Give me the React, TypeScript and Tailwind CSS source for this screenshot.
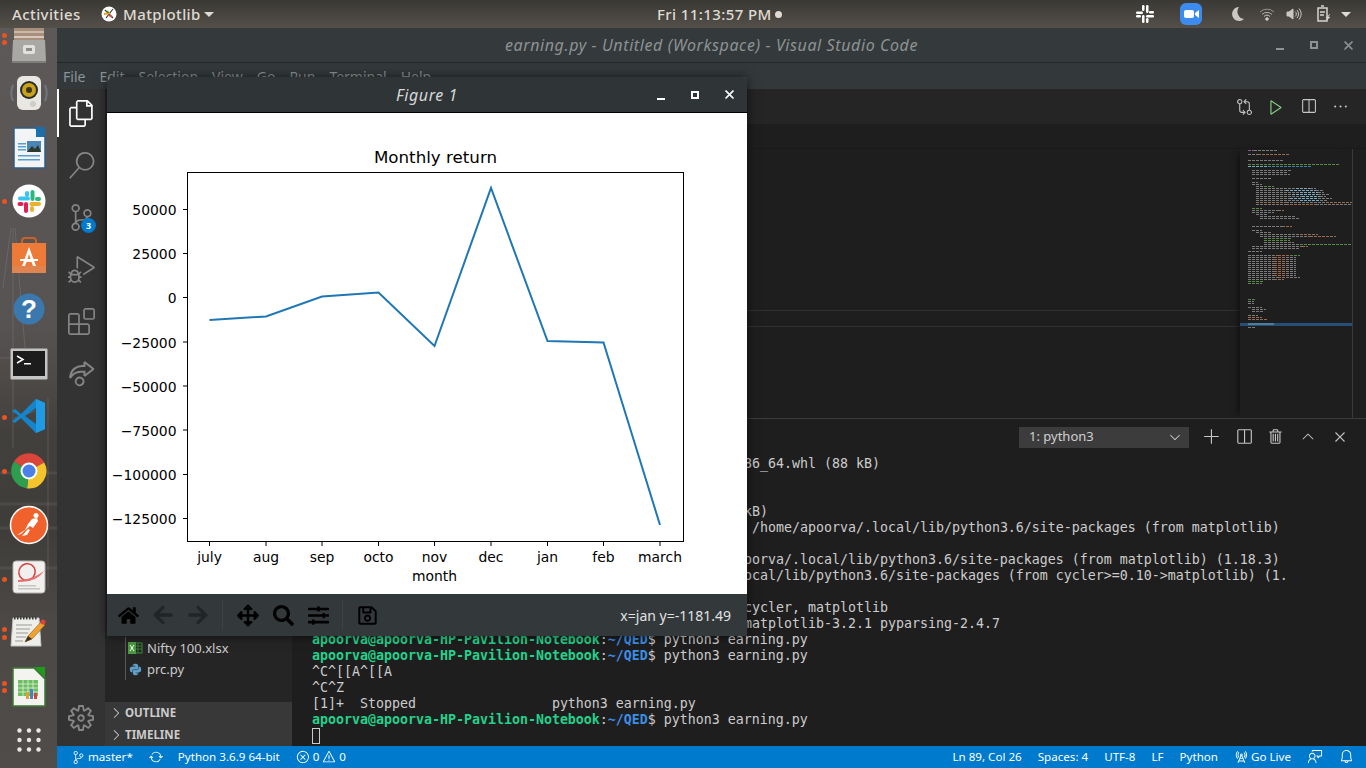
import { FaArrowLeft, FaArrowRight, FaArrowsAlt, FaHome, FaPython, FaRegSave, FaSearch, FaSlidersH } from 'react-icons/fa'
import {
  VscAdd, VscBell, VscChevronDown, VscChevronRight, VscChevronUp, VscClose, VscDebugAlt, VscEllipsis, VscError,
  VscExtensions, VscFeedback, VscFiles, VscGitCompare, VscLiveShare, VscPlay, VscRadioTower, VscSearch,
  VscSettingsGear, VscSourceControl, VscSplitHorizontal, VscSync, VscTrash, VscWarning,
} from 'react-icons/vsc'

function WindowButtons({ className }: { className: string }) {
  return (
    <div className={`flex items-center ${className}`}>
      <div className="w-[34px] flex justify-center"><div className="w-2 h-[2px] bg-current mt-2" /></div>
      <div className="w-[34px] flex justify-center"><div className="w-2 h-2 border-2 border-current" /></div>
      <div className="w-[34px] flex justify-center"><VscClose size={15} strokeWidth={1} /></div>
    </div>
  )
}

function Files() {
  return (
    <svg width="40" height="44" viewBox="0 0 40 44">
      <rect x="5" y="0" width="30" height="16" fill="#a88f7c" />
      <rect x="5" y="6" width="30" height="2" fill="#c9b8a8" />
      <rect x="5" y="11" width="30" height="2" fill="#d6c8bc" />
      <path d="M4 15h32l1 21a2 2 0 0 1-2 2H5a2 2 0 0 1-2-2z" fill="#aaa8a4" />
      <rect x="3" y="36" width="34" height="2" fill="#807e7b" />
      <rect x="14" y="20" width="12" height="9" rx="2" fill="#e2e0dd" />
      <rect x="17" y="23" width="6" height="3" fill="#8f8d8a" />
    </svg>
  )
}

function Speaker() {
  return (
    <svg width="44" height="44" viewBox="0 0 44 44">
      <path d="M6 14a20 20 0 0 0 0 16M38 14a20 20 0 0 1 0 16" fill="none" stroke="#7f8a99" strokeWidth="2" opacity=".6" />
      <rect x="10" y="5" width="24" height="34" rx="6" fill="#e9e7e2" />
      <circle cx="22" cy="19" r="9" fill="#2d2b26" />
      <circle cx="22" cy="19" r="7" fill="#c8a21c" />
      <circle cx="22" cy="19" r="3" fill="#3a3420" />
      <circle cx="26" cy="33" r="3" fill="#cfcdc8" />
    </svg>
  )
}

function Writer() {
  return (
    <svg width="40" height="44" viewBox="0 0 40 44">
      <path d="M5 2h22l9 9v31H5z" fill="#f2f4f5" stroke="#2f5e85" strokeWidth="1.5" />
      <path d="M27 2l9 9h-9z" fill="#1b72b0" />
      <path d="M24 1h12v10z" fill="#1b6ea8" />
      <rect x="9" y="17" width="8" height="1.5" fill="#5a9fd0" />
      <rect x="9" y="20" width="8" height="1.5" fill="#5a9fd0" />
      <rect x="9" y="23" width="8" height="1.5" fill="#5a9fd0" />
      <rect x="9" y="29" width="22" height="1.5" fill="#5a9fd0" />
      <rect x="9" y="33" width="22" height="1.5" fill="#5a9fd0" />
      <rect x="18" y="15" width="14" height="11" fill="#4c86b4" />
      <path d="M18 26l5-6 3 3 3-4 3 7z" fill="#2b3a2c" />
    </svg>
  )
}

function Slack() {
  return (
    <svg width="34" height="34" viewBox="0 0 34 34">
      <circle cx="17" cy="17" r="16.5" fill="#fff" />
      <rect x="6" y="12.5" width="12" height="4" rx="2" fill="#36c5f0" />
      <rect x="13" y="7" width="4" height="6" rx="2" fill="#36c5f0" />
      <rect x="18.5" y="6" width="4" height="11" rx="2" fill="#2eb67d" />
      <rect x="23" y="13" width="6" height="4" rx="2" fill="#2eb67d" />
      <rect x="17.5" y="18" width="11.5" height="4" rx="2" fill="#ecb22e" />
      <rect x="18" y="22" width="4" height="6" rx="2" fill="#ecb22e" />
      <rect x="12" y="18" width="4" height="11" rx="2" fill="#e01e5a" />
      <rect x="5.5" y="18" width="6" height="4" rx="2" fill="#e01e5a" />
    </svg>
  )
}

function AppStore() {
  return (
    <svg width="36" height="38" viewBox="0 0 36 38">
      <path d="M11 8V5a3 3 0 0 1 3-3h8a3 3 0 0 1 3 3v3" fill="none" stroke="#c9622a" strokeWidth="2" />
      <path d="M1 7h34v30H1z" fill="#ee7a38" />
      <rect x="1" y="30" width="34" height="7" fill="#e0854f" />
      <path d="M18 11l-7 19h3l1.5-4h5l1.5 4h3zM16.500 23l1.500-5 1.500 5z" fill="#fff" fillRule="evenodd" />
      <rect x="9" y="23" width="18" height="2" fill="#fff" />
    </svg>
  )
}

function Help() {
  return (
    <svg width="32" height="32" viewBox="0 0 32 32">
      <circle cx="16" cy="16" r="15.500" fill="#3b78ad" />
      <text x="16" y="25" textAnchor="middle" fill="#fff" className="font-['Liberation_Sans',sans-serif] text-[26px] font-bold">?</text>
    </svg>
  )
}

function Terminal() {
  return (
    <svg width="38" height="32" viewBox="0 0 38 32">
      <rect x=".5" y=".5" width="37" height="31" rx="1" fill="#c4c4c2" />
      <rect x="3" y="3" width="32" height="25" fill="#1c1c1c" />
      <path d="M7 8l6 3.500-6 3.500" fill="none" stroke="#fff" strokeWidth="1.500" />
      <rect x="14" y="15" width="7" height="1.500" fill="#fff" />
    </svg>
  )
}

function VsCode() {
  return (
    <svg width="36" height="36" viewBox="0 0 36 36">
      <path d="M25 1L10 16 4 11l-3 2 7 5-7 5 3 2 6-5 15 15 9-4V5zM25 10v16L14 18z" fill="#1484cd" fillRule="evenodd" />
      <path d="M25 1l9 4v26l-9 4v-9-16z" fill="#1e9be4" />
    </svg>
  )
}

function Chrome() {
  return (
    <svg width="36" height="36" viewBox="0 0 36 36">
      <path d="M18 18L3 8.500A17.500 17.500 0 0 1 33.200 9.500z" fill="#d9453a" />
      <path d="M18 18L33.200 9.500A17.500 17.500 0 0 1 16 35.400z" fill="#f5c32c" />
      <path d="M18 18L16 35.400A17.500 17.500 0 0 1 3 8.500z" fill="#2f9d4e" />
      <circle cx="18" cy="18" r="8.500" fill="#fff" />
      <circle cx="18" cy="18" r="6.500" fill="#4a80e8" />
    </svg>
  )
}

function Postman() {
  return (
    <svg width="40" height="40" viewBox="0 0 40 40">
      <circle cx="20" cy="20" r="18.500" fill="#f0612c" stroke="#fff" strokeWidth="1.500" />
      <circle cx="27" cy="10.500" r="2.500" fill="#fff" />
      <path d="M8 30l4-1 9-8 3 2 5-7-1-3-5 1-4 5-3 6zM13 31l5-1 3-5-2-1z" fill="#fff" />
    </svg>
  )
}

function Evince() {
  return (
    <svg width="34" height="36" viewBox="0 0 34 36">
      <rect x="1" y="2" width="32" height="32" rx="3" fill="#f1f0ee" stroke="#b5b3af" />
      <ellipse cx="15" cy="13" rx="8" ry="8.500" transform="rotate(35 15 13)" fill="none" stroke="#d4403c" strokeWidth="1.500" />
      <path d="M6 21c9 0 18-3 26-9-5 7-12 11-26 11z" fill="#e3716d" />
      <rect x="6" y="26" width="18" height="1.500" fill="#c5c4c1" />
      <rect x="6" y="29" width="22" height="1.500" fill="#c5c4c1" />
    </svg>
  )
}

function Notepad() {
  return (
    <svg width="38" height="36" viewBox="0 0 38 36">
      <path d="M3 4h26l2 28H1z" fill="#eeeeea" stroke="#c5c4bf" />
      <path d="M4 4h24" stroke="#3a3a38" strokeWidth="3" strokeDasharray="1.500 1.500" />
      <path d="M6 11h16M6 15h14M6 19h12M6 23h10M5 27h8" stroke="#9a9a96" strokeWidth="1" />
      <path d="M15 28l3-6 13-14 4 3-13 14z" fill="#f0a12e" stroke="#8a5a1a" strokeWidth=".6" />
      <path d="M15 28l3-6 4 3z" fill="#3a3020" />
      <circle cx="33" cy="8" r="2.500" fill="#d9453a" />
    </svg>
  )
}

function Calc() {
  return (
    <svg width="36" height="42" viewBox="0 0 36 42">
      <path d="M2 2h21l11 11v27H2z" fill="#f3f3f0" stroke="#3c7a32" strokeWidth="1.500" />
      <path d="M23 1h11v11z" fill="#1f9a1f" />
      <rect x="7" y="14" width="20" height="16" fill="#6cbf5e" />
      <path d="M7 18h20M7 22h20M7 26h20M12 14v16M17 14v16M22 14v16" stroke="#f3f3f0" strokeWidth=".7" />
      <rect x="15" y="26" width="3" height="7" fill="#e0a030" />
      <rect x="19" y="23" width="3" height="10" fill="#4a80c8" />
      <rect x="23" y="27" width="3" height="6" fill="#d9453a" />
    </svg>
  )
}

function Dots() {
  return (
    <svg width="24" height="24" viewBox="0 0 24 24" fill="#e8e8e6">
      <circle cx="2.500" cy="2.500" r="2.200" /><circle cx="12" cy="2.500" r="2.200" /><circle cx="21.500" cy="2.500" r="2.200" />
      <circle cx="2.500" cy="12" r="2.200" /><circle cx="12" cy="12" r="2.200" /><circle cx="21.500" cy="12" r="2.200" />
      <circle cx="2.500" cy="21.500" r="2.200" /><circle cx="12" cy="21.500" r="2.200" /><circle cx="21.500" cy="21.500" r="2.200" />
    </svg>
  )
}

const dockItems = [
  { h: 'h-[38px]', icon: <Files /> },
  { h: 'h-[54px]', icon: <Speaker /> },
  { h: 'h-[56px]', icon: <Writer /> },
  { h: 'h-[50px]', icon: <Slack /> },
  { h: 'h-[58px]', icon: <AppStore /> },
  { h: 'h-[50px]', icon: <Help /> },
  { h: 'h-[60px]', icon: <Terminal /> },
  { h: 'h-[44px]', icon: <VsCode /> },
  { h: 'h-[66px]', icon: <Chrome /> },
  { h: 'h-[42px]', icon: <Postman /> },
  { h: 'h-[62px]', icon: <Evince /> },
  { h: 'h-[48px]', icon: <Notepad /> },
  { h: 'h-[62px]', icon: <Calc /> },
  { h: 'h-[44px]', icon: <Dots /> },
]

const dockDots = [
  'top-[5px]', 'top-[12px]', 'top-[171px]', 'top-[387px]', 'top-[441px]', 'top-[549px]', 'top-[599px]', 'top-[607px]', 'top-[653px]', 'top-[660px]',
]

function Dock() {
  return (
    <div className="w-[57px] shrink-0 relative overflow-hidden flex flex-col bg-[linear-gradient(180deg,#5c5958_0%,#575352_40%,#42403d_55%,#3f3d3a_68%,#4b4846_80%,#4f4c4a_100%)]">
      {/* the wallpaper's mast, seen through the dock */}
      <svg className="absolute left-0 top-0" width="57" height="740" viewBox="0 0 57 740" fill="none" stroke="#8a8783" strokeOpacity=".35">
        <path d="M13 200V420M11 200l-8 60M15 200l10 120M0 330h18M48 370V560M44 380l-30 10" />
        <path d="M0 445h57M0 476h57M0 500h57M0 540h57" strokeOpacity=".18" strokeWidth="3" />
      </svg>
      {dockItems.map((item, i) => (
        <div key={i} className={`${item.h} shrink-0 flex items-center justify-center relative`}>{item.icon}</div>
      ))}
      {dockDots.map((d) => (
        <div key={d} className={`absolute left-[2px] w-[5px] h-[5px] rounded-full bg-[#e95420] ${d}`} />
      ))}
    </div>
  )
}

function TopBar() {
  return (
    <div className="h-[28px] shrink-0 flex items-center bg-gradient-to-b from-[#3a3935] to-[#544f49] text-[#dfdbd2] text-[15px] tracking-[0.4px] font-medium">
      <span className="ml-3 w-[89px]">Activities</span>
      <svg width="16" height="16" viewBox="0 0 16 16">
        <circle cx="8" cy="8" r="7.500" fill="#fff" />
        <path d="M4 4l8 8M12 3l-7 9" stroke="#3a3a3a" strokeWidth="1.200" />
        <path d="M3 8l6-1" stroke="#e8a020" strokeWidth="2" />
        <path d="M8 9l3 2" stroke="#d9453a" strokeWidth="2" />
        <path d="M6 5l2 2" stroke="#3a9a3a" strokeWidth="1.500" />
      </svg>
      <span className="ml-[6px] w-[81px]">Matplotlib</span>
      <div className="w-0 h-0 border-x-[5px] border-x-transparent border-t-[5px] border-t-[#dfdbd2]" />
      <span className="ml-[443px]">Fri 11:13:57 PM</span>
      <div className="ml-[3px] w-[7px] h-[7px] rounded-full bg-[#dfdbd2]" />
      <div className="ml-auto flex items-center pr-[15px]">
        <svg width="20" height="20" viewBox="0 0 20 20" fill="#fff">
          <rect x="1" y="7.500" width="7" height="2.500" rx="1.200" /><rect x="7" y="1" width="2.500" height="6" rx="1.200" />
          <rect x="11" y="1" width="2.500" height="8" rx="1.200" /><rect x="14" y="7" width="5" height="2.500" rx="1.200" />
          <rect x="11" y="11" width="8" height="2.500" rx="1.200" /><rect x="11" y="14" width="2.500" height="5" rx="1.200" />
          <rect x="7" y="11" width="2.500" height="8" rx="1.200" /><rect x="1" y="11" width="5" height="2.500" rx="1.200" />
        </svg>
        <div className="ml-[25px] w-[22px] h-[22px] rounded-[6px] bg-[#3c8cf0] flex items-center justify-center">
          <svg width="15" height="10" viewBox="0 0 15 10" fill="#fff">
            <rect x="0" y="1" width="10" height="8" rx="2" /><path d="M11 4l4-3v8l-4-3z" />
          </svg>
        </div>
        <svg className="ml-[29px]" width="14" height="16" viewBox="0 0 14 16" fill="#c9c7c2">
          <path d="M8 1a7 7 0 1 0 5 12A7.500 7.500 0 0 1 8 1z" />
        </svg>
        <svg className="ml-[14px]" width="16" height="14" viewBox="0 0 16 14" fill="none" stroke="#c9c7c2">
          <path d="M1 5a10 10 0 0 1 14 0" strokeOpacity=".6" /><path d="M3 7.500a7 7 0 0 1 10 0" strokeOpacity=".8" /><path d="M5 9.500a4 4 0 0 1 6 0" />
          <circle cx="8" cy="12" r="1.300" fill="#c9c7c2" />
        </svg>
        <svg className="ml-[11px]" width="16" height="14" viewBox="0 0 16 14" fill="#c9c7c2" stroke="#c9c7c2">
          <path d="M1 5h2l4-3v10l-4-3H1z" /><path d="M9 4.500a3 3 0 0 1 0 5M11 3a6 6 0 0 1 0 8M13 1.500a8 8 0 0 1 0 11" fill="none" />
        </svg>
        <svg className="ml-[15px]" width="14" height="18" viewBox="0 0 14 18" fill="none" stroke="#d5d3ce" strokeWidth="1.500">
          <path d="M1 3h9v13H1zM4 1h3" /><path d="M3 7h5M3 10h4" />
          <path d="M13 9l-4 4h2l-2 3 4-4h-2z" fill="#d5d3ce" strokeWidth=".4" />
        </svg>
        <div className="ml-[10px] w-0 h-0 border-x-[5px] border-x-transparent border-t-[5px] border-t-[#dfdbd2]" />
      </div>
    </div>
  )
}

function ActivityBar() {
  const cls = 'h-12 flex items-center justify-center text-[#858585]'
  return (
    <div className="w-[48px] shrink-0 bg-[#333333] flex flex-col gap-1">
      <div className="h-12 flex items-center justify-center text-white border-l-2 border-white pr-[2px]"><VscFiles size={27} /></div>
      <div className={cls}><VscSearch size={27} /></div>
      <div className={`${cls} relative`}>
        <VscSourceControl size={27} />
        <span className="absolute left-[24px] top-[25px] w-[15px] h-[15px] rounded-full bg-[#007acc] text-white text-[9px] font-bold flex items-center justify-center">3</span>
      </div>
      <div className={cls}><VscDebugAlt size={27} /></div>
      <div className={cls}><VscExtensions size={27} /></div>
      <div className={cls}><VscLiveShare size={27} /></div>
      <div className={`${cls} mt-auto mb-[4px]`}><VscSettingsGear size={26} /></div>
    </div>
  )
}

function SideBar() {
  return (
    <div className="w-[187px] shrink-0 bg-[#252526] flex flex-col justify-end text-[#cccccc]">
      <div className="ml-[20px] mb-[22px] border-l border-[#585858] text-[13px] leading-[21px]">
        <div className="h-[22px] flex items-center pl-[2px] gap-[4px]">
          <svg width="15" height="14" viewBox="0 0 15 14">
            <rect x="6" y="2" width="8" height="10" fill="none" stroke="#3f8a3f" />
            <path d="M6 5h8M6 8h8M10 2v10" stroke="#3f8a3f" strokeWidth=".8" />
            <rect x="0" y="1" width="8" height="12" fill="#4c9a3f" />
            <path d="M2 4l4 6M6 4l-4 6" stroke="#fff" strokeWidth="1" />
          </svg>
          <span>Nifty 100.xlsx</span>
        </div>
        <div className="h-[21px] flex items-center pl-[3px] gap-[5px]">
          <FaPython size={13} className="text-[#5f9fc9]" />
          <span>prc.py</span>
        </div>
      </div>
      <div className="h-[22px] bg-[#383838] flex items-center pl-[3px] gap-[1px] text-[11.5px] font-bold">
        <VscChevronRight size={16} /><span>OUTLINE</span>
      </div>
      <div className="h-[22px] bg-[#383838] flex items-center pl-[3px] gap-[1px] text-[11.5px] font-bold">
        <VscChevronRight size={16} /><span>TIMELINE</span>
      </div>
    </div>
  )
}

const mg = '#7a7a7a'
const mp = '#8a5a96'
const mo = '#9a6a50'
const mn = '#568a44'
const mb = '#4480ae'
const ml = '#7aaac0'

const minimap: [number, number, [number, string][]][] = [
  [147, 1248, [[6, mp], [8, mg]]],
  [149, 1248, [[6, mp], [24, mg]]],
  [153, 1248, [[10, mg], [32, mo]]],
  [159, 1248, [[36, mg]]],
  [163, 1248, [[92, mn]]],
  [165, 1248, [[20, ml], [44, mb]]],
  [169, 1252, [[40, mg]]],
  [171, 1252, [[36, mg]]],
  [173, 1252, [[38, mg]]],
  [177, 1252, [[20, mg]]],
  [181, 1252, [[6, mg]]],
  [183, 1252, [[10, mg]]],
  [185, 1256, [[8, mg], [10, mn]]],
  [187, 1256, [[40, mg], [14, ml], [6, mg]]],
  [189, 1256, [[30, mg], [30, ml], [8, mg]]],
  [191, 1256, [[44, mg], [18, ml], [6, mg]]],
  [193, 1256, [[36, mg], [26, ml], [12, mg]]],
  [195, 1256, [[46, mg], [18, ml], [6, mg]]],
  [197, 1256, [[34, mg], [28, ml], [14, mg]]],
  [199, 1256, [[44, mg], [20, ml], [8, mg]]],
  [201, 1256, [[30, mo], [40, mg], [26, mo]]],
  [203, 1256, [[30, mg], [30, mo], [36, mg]]],
  [207, 1252, [[10, mn]]],
  [209, 1252, [[26, mg], [6, mo]]],
  [211, 1252, [[22, mg]]],
  [213, 1256, [[12, mg]]],
  [215, 1260, [[36, mg]]],
  [217, 1260, [[40, mg]]],
  [225, 1252, [[30, mg], [10, mo]]],
  [229, 1252, [[10, mg]]],
  [231, 1256, [[16, mg]]],
  [233, 1260, [[40, mg], [18, mo]]],
  [235, 1260, [[50, mg], [26, mo]]],
  [237, 1264, [[28, mn]]],
  [239, 1264, [[26, mn]]],
  [241, 1264, [[30, mg]]],
  [243, 1264, [[36, mg], [52, mn]]],
  [245, 1252, [[50, mg], [6, mo]]],
  [247, 1252, [[48, mg]]],
  [250, 1248, [[14, mg]]],
  [254, 1248, [[30, mg], [12, mo], [10, mn]]],
  [256, 1248, [[26, mg], [12, mo], [10, mg]]],
  [258, 1248, [[26, mg], [12, mo], [10, mg]]],
  [260, 1248, [[26, mg], [12, mo], [10, mg]]],
  [262, 1248, [[26, mg], [12, mo], [10, mg]]],
  [264, 1248, [[26, mg], [12, mo], [10, mg]]],
  [266, 1248, [[26, mg], [12, mo], [10, mg]]],
  [268, 1248, [[26, mg], [12, mo], [10, mg]]],
  [270, 1248, [[26, mg], [12, mo], [10, mg]]],
  [272, 1248, [[26, mg], [12, mo], [10, mg]]],
  [274, 1248, [[26, mg], [12, mo], [10, mg]]],
  [276, 1248, [[30, mg], [12, mo], [10, mg]]],
  [278, 1248, [[26, mg], [10, mo]]],
  [280, 1248, [[16, mn]]],
  [282, 1248, [[14, mn]]],
  [298, 1248, [[8, mn]]],
  [300, 1248, [[6, mg]]],
  [302, 1248, [[6, mg]]],
  [306, 1248, [[14, mg]]],
  [308, 1252, [[14, mg]]],
  [310, 1252, [[12, mg]]],
  [314, 1248, [[10, mg]]],
  [316, 1248, [[14, mo]]],
  [318, 1248, [[20, mo]]],
  [326, 1248, [[8, mg]]],
]

function Minimap() {
  return (
    <svg width="112" height="270" viewBox="1240 148 112 270">
      <rect x="1240" y="322" width="112" height="3" fill="#264f78" />
      <rect x="1248" y="322" width="26" height="2" fill={ml} opacity=".5" />
      {minimap.map(([y, x, segs]) => {
        let cur = x
        return segs.map(([w, c], i) => {
          const l = <path key={`${y}-${i}`} d={`M${cur} ${y + 0.5}h${w}`} stroke={c} strokeDasharray="3 1" />
          cur += w
          return l
        })
      })}
    </svg>
  )
}

function Prompt({ children }: { children?: string }) {
  return (
    <div className="h-4 whitespace-pre">
      <span className="text-[#23d18b] font-bold">apoorva@apoorva-HP-Pavilion-Notebook</span>
      <span>:</span>
      <span className="text-[#3b8eea] font-bold">~/QED</span>
      <span>$ {children}</span>
    </div>
  )
}

function Panel() {
  return (
    <div className="h-[328px] shrink-0 border-t border-[#3c3c3c] bg-[#1e1e1e] flex flex-col">
      <div className="h-[36px] shrink-0 flex items-center justify-end pr-[10px] text-[#c5c5c5]">
        <div className="w-[170px] h-[21px] bg-[#3c3c3c] flex items-center justify-between pl-[10px] pr-[6px] text-[13px] text-[#d0d0d0]">
          <span>1: python3</span>
          <VscChevronDown size={16} />
        </div>
        <div className="ml-[7px] w-8 flex justify-center"><VscAdd size={18} /></div>
        <div className="w-8 flex justify-center"><VscSplitHorizontal size={18} /></div>
        <div className="w-8 flex justify-center"><VscTrash size={18} /></div>
        <div className="w-8 flex justify-center"><VscChevronUp size={18} /></div>
        <div className="w-8 flex justify-center"><VscClose size={18} /></div>
      </div>
      <div className="pl-[20px] pt-[1px] font-['DejaVu_Sans_Mono',monospace] text-[13.29px] leading-4 text-[#cccccc] whitespace-pre">
        <div className="h-4 ml-[432px]">86_64.whl (88 kB)</div>
        <div className="h-4" />
        <div className="h-4" />
        <div className="h-4 ml-[432px]">kB)</div>
        <div className="h-4 ml-[440px]">/home/apoorva/.local/lib/python3.6/site-packages (from matplotlib)</div>
        <div className="h-4" />
        <div className="h-4 ml-[432px]">oorva/.local/lib/python3.6/site-packages (from matplotlib) (1.18.3)</div>
        <div className="h-4 ml-[432px]">ocal/lib/python3.6/site-packages (from cycler&gt;=0.10-&gt;matplotlib) (1.</div>
        <div className="h-4" />
        <div className="h-4 ml-[432px]">cycler, matplotlib</div>
        <div className="h-4 ml-[432px]">matplotlib-3.2.1 pyparsing-2.4.7</div>
        <Prompt>python3 earning.py</Prompt>
        <Prompt>python3 earning.py</Prompt>
        <div className="h-4">^C^[[A^[[A</div>
        <div className="h-4">^C^Z</div>
        <div className="h-4">[1]+  Stopped                 python3 earning.py</div>
        <Prompt>python3 earning.py</Prompt>
        <div className="w-2 h-4 border border-[#cccccc]" />
      </div>
    </div>
  )
}

function Editor() {
  return (
    <div className="flex-1 flex flex-col min-h-0">
      <div className="h-[35px] shrink-0 bg-[#252526] flex items-center justify-end pr-[10px] text-[#c5c5c5]">
        <div className="w-8 flex justify-center"><VscGitCompare size={17} /></div>
        <div className="w-8 flex justify-center text-[#89d185]"><VscPlay size={18} /></div>
        <div className="w-8 flex justify-center"><VscSplitHorizontal size={17} /></div>
        <div className="w-8 flex justify-center"><VscEllipsis size={17} /></div>
      </div>
      <div className="h-[24px] shrink-0 bg-[#1e1e1e]" />
      <div className="flex-1 flex min-h-0 bg-[#1e1e1e] border-t border-[#1a1a1a]">
        <div className="flex-1">
          <div className="mt-[161px] h-[17px] border-y border-[#303030]" />
        </div>
        <div className="w-[112px] shrink-0 shadow-[-6px_0_6px_-4px_#111]"><Minimap /></div>
        <div className="w-[14px] shrink-0 border-l border-[#3a3a3a]" />
      </div>
    </div>
  )
}

const yTicks: [number, string][] = [
  [209.5, '50000'], [253.5, '25000'], [297.5, '0'], [342, '\u221225000'],
  [386, '\u221250000'], [430, '\u221275000'], [474.5, '\u2212100000'], [518.5, '\u2212125000'],
]

const xTicks: [number, string][] = [
  [209.5, 'july'], [266, 'aug'], [322, 'sep'], [378.5, 'octo'], [434.5, 'nov'],
  [491, 'dec'], [547.5, 'jan'], [603.5, 'feb'], [660, 'march'],
]

function Chart() {
  return (
    <svg width="640" height="481" viewBox="107 113 640 481" className="block font-['DejaVu_Sans',sans-serif] text-[13.9px]">
      <text x="435.500" y="163" textAnchor="middle" className="text-[16.7px]">Monthly return</text>
      <rect x="187.500" y="172.500" width="496" height="369" fill="none" stroke="#000" strokeWidth="1" />
      {yTicks.map(([y, t]) => (
        <g key={t}>
          <path d={`M183 ${y}H187`} stroke="#000" />
          <text x="176.500" y={y + 5.5} textAnchor="end">{t}</text>
        </g>
      ))}
      {xTicks.map(([x, t]) => (
        <g key={t}>
          <path d={`M${x} 542V546`} stroke="#000" />
          <text x={x} y="562" textAnchor="middle">{t}</text>
        </g>
      ))}
      <text x="434.500" y="581" textAnchor="middle">month</text>
      <polyline
        points="209.500,320 266,316.500 322,296.500 378.500,292.500 434.500,346 491,188 547.500,341 603.500,342.500 660,525"
        fill="none" stroke="#1f77b4" strokeWidth="2"
      />
    </svg>
  )
}

function Figure() {
  return (
    <div className="absolute left-[107px] top-[77px] w-[640px] flex flex-col shadow-[0_0_10px_rgba(0,0,0,0.6)]">
      <div className="h-[36px] bg-[#2f3437] rounded-t-[8px] border-b border-black flex items-center relative">
        <span className="flex-1 text-center text-[16px] tracking-[0.6px] italic text-[#d6d8d8]">Figure 1</span>
        <div className="absolute right-[1px]"><WindowButtons className="text-white" /></div>
      </div>
      <div className="bg-white h-[481px]"><Chart /></div>
      <div className="h-[42px] bg-[#33393b] flex items-center pl-[10px] pr-[16px] text-black">
        <div className="w-[22px] flex justify-center"><FaHome size={21} /></div>
        <div className="ml-[13px] w-[22px] flex justify-center text-[#212527]"><FaArrowLeft size={22} /></div>
        <div className="ml-[13px] w-[22px] flex justify-center text-[#212527]"><FaArrowRight size={22} /></div>
        <div className="ml-[13px] h-[30px] border-l border-[#3c4244]" />
        <div className="ml-[14px] w-[22px] flex justify-center"><FaArrowsAlt size={23} /></div>
        <div className="ml-[13px] w-[22px] flex justify-center"><FaSearch size={21} /></div>
        <div className="ml-[13px] w-[22px] flex justify-center"><FaSlidersH size={21} /></div>
        <div className="ml-[13px] h-[30px] border-l border-[#3c4244]" />
        <div className="ml-[13px] w-[22px] flex justify-center"><FaRegSave size={21} /></div>
        <span className="ml-auto text-[14px] text-[#e0e2e2]">x=jan y=-1181.49</span>
      </div>
    </div>
  )
}

function StatusBar() {
  return (
    <div className="h-[22px] shrink-0 bg-[#007acc] text-white text-[11.6px] flex items-center">
      <VscSourceControl size={13} className="ml-[15px]" />
      <span className="ml-[3px]">master*</span>
      <VscSync size={14} className="ml-[16px]" />
      <span className="ml-[15px]">Python 3.6.9 64-bit</span>
      <VscError size={14} className="ml-[16px]" />
      <span className="ml-[3px]">0</span>
      <VscWarning size={14} className="ml-[3px]" />
      <span className="ml-[3px]">0</span>
      <div className="ml-auto flex items-center pr-[12px]">
        <span>Ln 89, Col 26</span>
        <span className="ml-[16px]">Spaces: 4</span>
        <span className="ml-[16px]">UTF-8</span>
        <span className="ml-[16px]">LF</span>
        <span className="ml-[16px]">Python</span>
        <VscRadioTower size={14} className="ml-[16px]" />
        <span className="ml-[3px]">Go Live</span>
        <VscFeedback size={15} className="ml-[17px]" />
        <VscBell size={15} className="ml-[16px]" />
      </div>
    </div>
  )
}

export default function App() {
  return (
    <div className="w-[1366px] h-[768px] relative overflow-hidden flex flex-col font-['Noto_Sans',sans-serif] bg-[#1e1e1e]">
      <TopBar />
      <div className="flex-1 flex min-h-0">
        <Dock />
        <div className="flex-1 flex flex-col min-w-0">
          <div className="h-[35px] shrink-0 bg-[#343a3c] border-b border-[#23282a] flex items-center relative">
            <span className="w-full text-center text-[16px] tracking-[0.6px] italic text-[#8d9293]">earning.py - Untitled (Workspace) - Visual Studio Code</span>
            <div className="absolute right-[1px] inset-y-0 flex items-center"><WindowButtons className="text-[#8d9293]" /></div>
          </div>
          <div className="h-[26px] shrink-0 bg-[#33393b] flex items-center pl-[6px] gap-[14px] text-[14px] text-[#8b9396]">
            <span>File</span>
            <span>Edit</span>
            <span>Selection</span>
            <span>View</span>
            <span>Go</span>
            <span>Run</span>
            <span>Terminal</span>
            <span>Help</span>
          </div>
          <div className="flex-1 flex min-h-0">
            <ActivityBar />
            <SideBar />
            <div className="flex-1 flex flex-col min-w-0">
              <Editor />
              <Panel />
            </div>
          </div>
          <StatusBar />
        </div>
      </div>
      <Figure />
    </div>
  )
}
